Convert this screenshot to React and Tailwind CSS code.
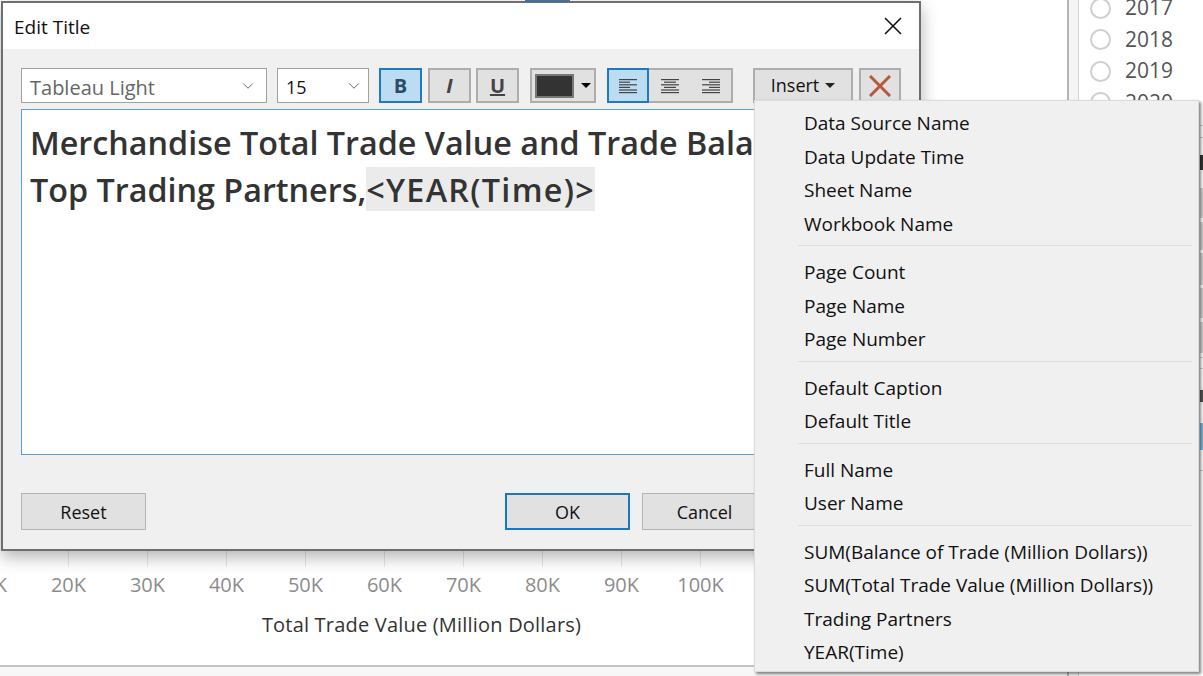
import React from 'react'
import { ChevronDown } from 'lucide-react'

const ui = { fontFamily: '"Open Sans", "Noto Sans", sans-serif' }

const ticks = ['10K', '20K', '30K', '40K', '50K', '60K', '70K', '80K', '90K', '100K']
const years = ['2017', '2018', '2019', '2020']

const menuGroups = [
  ['Data Source Name', 'Data Update Time', 'Sheet Name', 'Workbook Name'],
  ['Page Count', 'Page Name', 'Page Number'],
  ['Default Caption', 'Default Title'],
  ['Full Name', 'User Name'],
  ['SUM(Balance of Trade (Million Dollars))', 'SUM(Total Trade Value (Million Dollars))', 'Trading Partners', 'YEAR(Time)']
]

const Cross = ({ size, stroke, color }) => (
  <svg width={size} height={size} viewBox={`0 0 ${size} ${size}`} fill="none" stroke={color} strokeWidth={stroke}>
    <path d={`M1 1L${size - 1} ${size - 1}M${size - 1} 1L1 ${size - 1}`} />
  </svg>
)

const AlignIcon = ({ kind }) => {
  const rows = kind === 'left'
    ? [[0, 18], [0, 11], [0, 18], [0, 11], [0, 18], [0, 18]]
    : kind === 'center'
      ? [[0, 18], [3, 12], [0, 18], [3, 12], [0, 18], [0, 18]]
      : [[0, 18], [7, 11], [0, 18], [7, 11], [0, 18], [0, 18]]
  return (
    <svg width="18" height="16" viewBox="0 0 18 16">
      {rows.map((r, i) => (
        <rect key={i} x={r[0]} y={1 + i * 2.6} width={r[1]} height="1.2" fill="#444" />
      ))}
    </svg>
  )
}

const ToolButton = ({ active, className, children }) => (
  <div className={`flex items-center justify-center h-[35px] border-2 ${active ? 'border-[#1f7ac4] bg-[#bcdcf4]' : 'border-[#adadad] bg-[#e1e1e1]'} ${className}`}>
    {children}
  </div>
)

const Select = ({ className, text, textClass }) => (
  <div className={`flex items-center justify-between h-[35px] bg-white border border-[#a0a0a0] ${className}`}>
    <span className={`pt-[4px] ${textClass}`}>{text}</span>
    <ChevronDown size={18} strokeWidth={1.2} className="text-[#555]" />
  </div>
)

const DialogButton = ({ focused, children }) => (
  <div className={`flex items-center justify-center w-[125px] h-[37px] pt-[2px] text-[18px] text-[#111] bg-[#e1e1e1] ${focused ? 'border-2 border-[#1a78c2]' : 'border border-[#b4b4b4]'}`}>
    {children}
  </div>
)

export default function App() {
  return (
    <div className="relative flex w-[1203px] h-[676px] overflow-hidden bg-white" style={ui}>
      {/* sheet behind the dialog */}
      <div className="flex flex-col w-[1067px] h-full">
        <div className="h-[551px] shrink-0" />
        <div className="flex h-[16px] -ml-[50px] shrink-0">
          {ticks.map((t) => (
            <div key={t} className="flex justify-center w-[79px]">
              <div className="w-px h-full bg-[#e6e6e6]" />
            </div>
          ))}
        </div>
        <div className="flex h-[36px] -ml-[50px] items-center text-[20px] text-[#8c8c8c] shrink-0">
          {ticks.map((t) => (
            <div key={t} className="w-[79px] text-center">{t}</div>
          ))}
        </div>
        <div className="flex justify-center w-[843px] mt-[6px] text-[20px] text-[#333] font-medium leading-[32px] tracking-[0.2px] shrink-0">
          Total Trade Value (Million Dollars)
        </div>
        <div className="h-[24px] shrink-0" />
        <div className="h-[2px] bg-[#c4c4c4] shrink-0" />
        <div className="flex-1 bg-[#f7f7f7]" />
      </div>

      <div className="flex-1 flex border-l-2 border-[#b5b5b5]">
        <div className="w-[10px] bg-[#f5f5f5] border-r border-[#d4d4d4]" />
        <div className="flex flex-col gap-[9.5px] pl-[11px] -mt-[3px]">
          {years.map((y) => (
            <div key={y} className="flex items-center gap-[14px] h-[22px] text-[21px] text-[#555]">
              <div className="w-[21px] h-[21px] rounded-full border-2 border-[#cfcfcf]" />
              {y}
            </div>
          ))}
        </div>
      </div>

      {/* bits of the sheet that peek out right of the menu */}
      <div className="absolute left-[1200px] top-[125px] flex flex-col w-[3px]">
        <div className="h-px bg-[#d0d0d0]" />
        <div className="h-px mt-[11px] bg-[#d0d0d0]" />
        <div className="h-[15px] mt-[17px] bg-[#333]" />
        <div className="h-[30px] mt-[18px] bg-[#d4d4d4]" />
        <div className="h-[28px] mt-[4px] bg-[#d4d4d4]" />
        <div className="h-[32px] mt-[3px] bg-[#d4d4d4]" />
        <div className="h-[30px] mt-[3px] bg-[#d4d4d4]" />
        <div className="h-[31px] mt-[4px] bg-[#d4d4d4]" />
        <div className="h-px mt-[4px] bg-[#d0d0d0]" />
        <div className="h-px mt-[10px] bg-[#d0d0d0]" />
        <div className="h-[12px] mt-[21px] bg-[#555]" />
        <div className="h-[27px] mt-[21px] bg-[#7fb5d8]" />
        <div className="h-px mt-[20px] bg-[#d0d0d0]" />
      </div>

      {/* dialog */}
      <div className="absolute left-px top-px flex flex-col w-[920px] h-[550px] border-2 border-[#6e6e6e] bg-[#f0f0f0] shadow-[0_6px_16px_rgba(0,0,0,0.3)]">
        <div className="flex items-center justify-between h-[46px] pl-[11px] pr-[17px] bg-white text-[19px] text-[#111] shrink-0">
          <span className="pt-[3px]">Edit Title</span>
          <Cross size={18} stroke={1.6} color="#111" />
        </div>

        <div className="flex flex-col flex-1 px-[18px] pt-[19px]">
          <div className="flex items-start h-[35px] shrink-0">
            <Select className="w-[246px] pl-[8px] pr-[9px]" text="Tableau Light" textClass="text-[20px] text-[#666]" />
            <Select className="w-[92px] ml-[10px] pl-[8px] pr-[5px]" text="15" textClass="text-[18px] text-[#111]" />
            <ToolButton active className="w-[43px] ml-[10px] text-[20px] font-bold text-[#2f4a66]">B</ToolButton>
            <ToolButton className="w-[43px] ml-[6px] text-[20px] font-bold italic text-[#444]">I</ToolButton>
            <ToolButton className="w-[43px] ml-[5px] text-[20px] font-bold text-[#444] underline">U</ToolButton>
            <ToolButton className="w-[66px] ml-[11px] gap-[7px]">
              <div className="w-[39px] h-[24px] bg-[#333] border-2 border-[#777]" />
              <div className="w-0 h-0 border-x-[5px] border-x-transparent border-t-[5px] border-t-black" />
            </ToolButton>
            <div className="flex ml-[11px]">
              <ToolButton active className="w-[42px]"><AlignIcon kind="left" /></ToolButton>
              <ToolButton className="w-[42px] border-l-0 border-r-0"><AlignIcon kind="center" /></ToolButton>
              <ToolButton className="w-[42px] border-l-0"><AlignIcon kind="right" /></ToolButton>
            </div>
            <ToolButton className="w-[100px] ml-[20px] gap-[6px] text-[18px] text-[#111]">
              Insert
              <div className="w-0 h-0 border-x-[5px] border-x-transparent border-t-[5px] border-t-[#222]" />
            </ToolButton>
            <ToolButton className="w-[42px] ml-[6px]">
              <Cross size={22} stroke={3} color="#b9573a" />
            </ToolButton>
          </div>

          <div className="mt-[6px] h-[346px] bg-white border border-[#5a9fd4] pl-[8px] pt-[9px] text-[32.3px] leading-[47px] font-semibold text-[#333] whitespace-nowrap overflow-hidden shrink-0">
            <div>Merchandise Total Trade Value and Trade Balance for</div>
            <div>Top Trading Partners,<span className="bg-[#ebebeb] tracking-[1.3px]">&lt;YEAR(Time)&gt;</span></div>
          </div>

          <div className="flex justify-between mt-[38px]">
            <DialogButton>Reset</DialogButton>
            <div className="flex gap-[12px] mr-[134px]">
              <DialogButton focused>OK</DialogButton>
              <DialogButton>Cancel</DialogButton>
            </div>
          </div>
        </div>
      </div>

      {/* top edge of the selected mark peeking above the dialog */}
      <div className="absolute left-[525px] top-0 w-[45px] h-[2px] bg-[#4a6f96]" />

      {/* insert menu */}
      <div className="absolute left-[754px] top-[100px] w-[445px] h-[572px] bg-[#f0f0f0] border border-[#dcdcdc] shadow-[2px_2px_3px_rgba(0,0,0,0.5)] pt-[6px] pl-[49px] text-[19px] text-[#111]">
        {menuGroups.map((group, i) => (
          <div key={i} className={i > 0 ? 'relative mt-[4px] pt-[11px]' : ''}>
            {i > 0 && <div className="absolute -left-[6px] w-[394px] top-0 h-px bg-[#dedede]" />}
            {group.map((item) => (
              <div key={item} className="h-[33.5px] leading-[33.5px] whitespace-nowrap">{item}</div>
            ))}
          </div>
        ))}
      </div>
    </div>
  )
}
